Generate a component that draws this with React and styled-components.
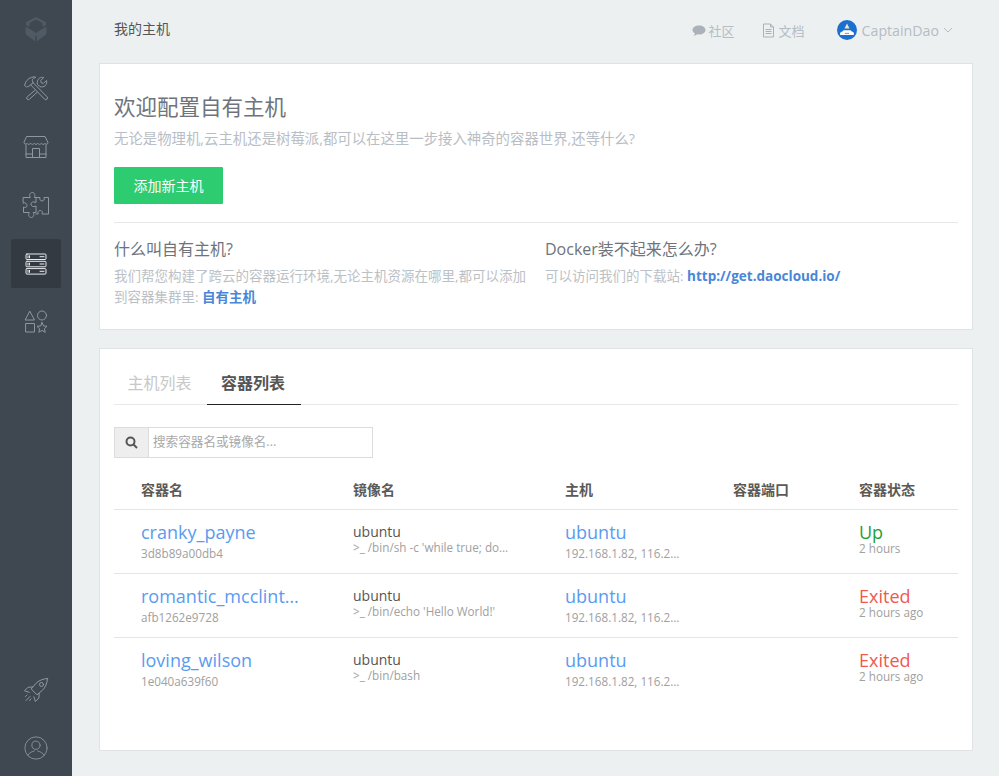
import React from 'react';
import styled, { createGlobalStyle } from 'styled-components';

const FONT = '"Open Sans", "Noto Sans CJK SC", sans-serif';

const GlobalStyle = createGlobalStyle`
  html, body {
    margin: 0;
    padding: 0;
    height: 100%;
    background: #ecf0f1;
    font-family: ${FONT};
    color: #555;
  }
  * { box-sizing: border-box; }
`;

const Page = styled.div`
  display: flex;
  width: 999px;
  height: 776px;
  overflow: hidden;
  background: #ecf0f1;
`;

const Sidebar = styled.nav`
  width: 72px;
  flex: none;
  background: #3f4750;
  display: flex;
  flex-direction: column;
  align-items: center;
  padding-top: 4px;
`;

const NavList = styled.div`
  display: flex;
  flex-direction: column;
  gap: 9.5px;
  flex: 1;
`;

const NavItem = styled.a`
  width: 50px;
  height: 49px;
  display: flex;
  align-items: center;
  justify-content: center;
  border-radius: 2px;
  color: ${p => (p.$active ? '#e8ebed' : '#8f979e')};
  background: ${p => (p.$active ? '#333a42' : 'transparent')};
`;

const LogoItem = styled(NavItem)`
  height: 50px;
`;

const BottomList = styled.div`
  display: flex;
  flex-direction: column;
  gap: 9.5px;
  padding-bottom: 3.5px;
`;

const NavSvg = styled.svg`
  width: 28px;
  height: 28px;
  fill: none;
  stroke: currentColor;
  stroke-width: 1;
  stroke-linejoin: round;
  stroke-linecap: round;
`;

const LogoSvg = styled(NavSvg)`
  stroke: none;
  fill: #505a64;
`;

const UserSvg = styled(NavSvg)`
  width: 24px;
  height: 24px;
`;

const Main = styled.main`
  width: 927px;
  padding: 0 26px 0 27px;
  display: flex;
  flex-direction: column;
`;

const TopBar = styled.header`
  height: 63px;
  display: flex;
  align-items: flex-start;
  justify-content: space-between;
  padding: 18px 20px 0 15px;
`;

const PageTitle = styled.div`
  font-size: 14px;
  line-height: 22px;
  color: #555;
`;

const TopLinks = styled.div`
  display: flex;
  align-items: center;
  height: 26px;
  margin-top: -1px;
`;

const TopLink = styled.a`
  display: flex;
  align-items: center;
  gap: ${p => p.$iconGap}px;
  font-size: 13px;
  color: #b5bcc4;
  margin-right: ${p => p.$gap}px;
`;

const UserName = styled.span`
  font-size: 14.2px;
  color: #b5bcc4;
  margin: 0 4px 0 5px;
`;

const Avatar = styled.svg`
  width: 20px;
  height: 20px;
  flex: none;
`;

const Card = styled.section`
  background: #fff;
  border: 1px solid #e0e3e5;
  padding: 0 14px;
`;

const IntroCard = styled(Card)`
  height: 267px;
  padding-top: 28px;
`;

const ListCard = styled(Card)`
  height: 403px;
  margin-top: 18px;
  padding-top: 15px;
`;

const Heading = styled.h1`
  margin: 0;
  font-size: 21.5px;
  font-weight: 400;
  line-height: 30px;
  color: #6e747b;
`;

const Lead = styled.p`
  margin: 7px 0 0;
  font-size: 14.4px;
  line-height: 20px;
  color: #b9bec4;
`;

const PrimaryButton = styled.button`
  display: block;
  width: 109px;
  height: 37px;
  margin-top: 18px;
  padding-bottom: 3px;
  border: 0;
  border-radius: 1px;
  background: #2ecc71;
  color: #fff;
  font-family: ${FONT};
  font-size: 14px;
`;

const Divider = styled.hr`
  margin: 18px 0 0;
  border: 0;
  border-top: 1px solid #e6e8ea;
`;

const HelpColumns = styled.div`
  display: grid;
  grid-template-columns: 431px 1fr;
  padding-top: 14px;
`;

const HelpBlock = styled.div`
  padding-right: 16px;
`;

const HelpTitle = styled.h2`
  margin: 0;
  font-size: 16px;
  font-weight: 400;
  line-height: 24px;
  color: #6e747b;
`;

const HelpText = styled.p`
  margin: 5px 0 0;
  font-size: 13.5px;
  line-height: 21px;
  color: #bcc1c6;
`;

const StrongLink = styled.a`
  font-weight: 700;
  color: #4a86d8;
`;

const Tabs = styled.div`
  display: flex;
  height: 41px;
  border-bottom: 1px solid #e8e8e8;
`;

const Tab = styled.a`
  width: ${p => p.$width}px;
  height: 41px;
  padding: 0 2px 5px 0;
  display: flex;
  align-items: center;
  justify-content: center;
  font-size: 16px;
  font-weight: ${p => (p.$active ? 700 : 400)};
  color: ${p => (p.$active ? '#555' : '#c8c8c8')};
  border-bottom: ${p => (p.$active ? '1px solid #222' : '0')};
`;

const SearchBox = styled.div`
  display: flex;
  width: 259px;
  height: 31px;
  margin-top: 22px;
  border: 1px solid #dcdcdc;
`;

const SearchAddon = styled.span`
  width: 34px;
  flex: none;
  display: flex;
  align-items: center;
  justify-content: center;
  background: #eee;
  border-right: 1px solid #dcdcdc;
  color: #555;
`;

const SearchInput = styled.input`
  flex: 1;
  min-width: 0;
  border: 0;
  outline: 0;
  padding: 0 4px 2px;
  font-family: ${FONT};
  font-size: 12.6px;
  color: #555;
  &::placeholder { color: #a9a9a9; opacity: 1; }
`;

const COLUMNS = '239px 212px 168px 126px 99px';

const HeadRow = styled.div`
  display: grid;
  grid-template-columns: ${COLUMNS};
  height: 52px;
  padding-top: 22px;
  border-bottom: 1px solid #e4e4e4;
  font-size: 14px;
  font-weight: 700;
  line-height: 20px;
  color: #5a5a5a;
`;

const Row = styled.div`
  display: grid;
  grid-template-columns: ${COLUMNS};
  height: 64px;
  padding-top: 10px;
  border-bottom: ${p => (p.$last ? '0' : '1px solid #e4e4e4')};
`;

const NameCell = styled.div`
  padding-left: 27px;
  min-width: 0;
`;

const Cell = styled.div`
  min-width: 0;
`;

const HostCell = styled.div`
  min-width: 0;
  padding-right: 48px;
`;

const Primary = styled.div`
  font-size: 18px;
  line-height: 24px;
  color: ${p => p.$color || '#5a9bf0'};
  white-space: nowrap;
  overflow: hidden;
  text-overflow: ellipsis;
  max-width: ${p => (p.$max ? `${p.$max}px` : 'none')};
`;

const Secondary = styled.div`
  font-size: 11.7px;
  line-height: 16px;
  color: #a0a0a0;
  white-space: nowrap;
  overflow: hidden;
  text-overflow: ellipsis;
  margin-top: ${p => (p.$tight ? '-4px' : '1px')};
`;

const ImageName = styled.div`
  font-size: 14px;
  line-height: 16px;
  padding-top: 4px;
  color: #555;
`;

const Command = styled.div`
  font-size: 11.7px;
  line-height: 15px;
  color: #a0a0a0;
  white-space: nowrap;
  overflow: hidden;
  text-overflow: ellipsis;
  max-width: 158px;
`;

function LogoIcon() {
  return (
    <LogoSvg viewBox="0 0 28 28">
      <path d="M14 2l10 5v3l-3.500 2V8L14 4.500 7.500 8v4L4 10V7z" />
      <path d="M3.500 11.500l6 3.500 4.500 3 4.500-3 6-3.500V19l-9.700 7.500V21l-.8-.5-.8.5v5.500L3.500 19z" />
    </LogoSvg>
  );
}

function ToolsIcon() {
  return (
    <NavSvg viewBox="0 0 28 28">
      <path d="M11 8.500L25 22.800a1.600 1.600 0 0 1-2.400 2.400L8.600 10.800" />
      <path d="M8.600 10.800l-1.800 1.700-1.200-.2-1 1-2.300-2.300 1-1 .1-1.200C5 5.500 8 3 12.500 2.800l1.300.5C11.500 4 10.300 5 10.300 6.300l.7 2.200z" />
      <path d="M13 16.300L5.200 22.800a1.600 1.600 0 0 0 2.200 2.400l8-7.200" />
      <path d="M17 11.800l-1.500-1.500c-.6-2.500 0-4.800 2-6.200 1.400-.9 3-1 4.200-.6l-3 3 .5 2.300 2.300.6 3-3c.6 2 .1 4-1.300 5.300-1.500 1.300-3.400 1.500-5 1z" />
    </NavSvg>
  );
}

function StoreIcon() {
  return (
    <NavSvg viewBox="0 0 28 28">
      <path d="M5 3.500h18l3 6c0 2-2.200 2.200-3 .8-.8 1.400-3 1.400-3.700 0-.8 1.400-3 1.400-3.600 0-.7 1.400-2.900 1.400-3.500 0-.7 1.400-2.900 1.400-3.600 0-.7 1.400-2.900 1.400-3.600 0-.8 1.400-3 1.200-3-.8z" />
      <path d="M4 12v12.500h20V12" />
      <path d="M10.500 24.500v-9h7v9M4 21h6.500M17.500 21H24" />
    </NavSvg>
  );
}

function PuzzleIcon() {
  return (
    <NavSvg viewBox="0 0 28 28">
      <path d="M1.500 6.500h6.800c-1.600-3 .1-5 2-5s3.500 2 2 5h1.700v5c-3-1.400-5-.3-5 1.700s2 3.200 5 1.800v6.500h-2.800c1.600 3 0 5-2 5s-3.500-2-1.900-5H1.500v-5.500c1.800 1 3.500.2 3.500-1.500S3.300 11 1.500 12z" />
      <path d="M14 6.500h4c-.6 2 .2 3.500 2 3.500s2.600-1.500 2-3.500h4.500v16.500H20c.8-1.800.1-3.500-1.800-3.500s-2.700 1.700-2 3.500H14" />
    </NavSvg>
  );
}

function ServerIcon() {
  return (
    <NavSvg viewBox="0 0 28 28">
      <rect x="4" y="4" width="20" height="5.500" rx="1" />
      <rect x="4" y="11.300" width="20" height="5.500" rx="1" />
      <rect x="4" y="18.600" width="20" height="5.500" rx="1" />
      <path d="M6 5.800v2M7.500 5.800v2M18 6.700h4M6 13.100v2M7.500 13.100v2M18 14h4M6 20.400v2M7.500 20.400v2M18 21.300h4" />
    </NavSvg>
  );
}

function ShapesIcon() {
  return (
    <NavSvg viewBox="0 0 28 28">
      <path d="M8 3.500l4.500 8.500h-9z" />
      <circle cx="20" cy="7.500" r="4.500" />
      <rect x="4" y="15.500" width="8.500" height="8.500" />
      <path d="M20 14.500l1.500 3.400 3.500.4-2.600 2.400.8 3.600-3.200-1.900-3.200 1.900.8-3.600-2.600-2.400 3.500-.4z" />
    </NavSvg>
  );
}

function RocketIcon() {
  return (
    <NavSvg viewBox="0 0 28 28">
      <path d="M25.500 2.500c-4.500.3-9 2-12 5.300l-4.300 5.200 5.800 5.800 5.200-4.300c3.300-3 5-7.500 5.300-12z" />
      <circle cx="19.500" cy="8.500" r="2" />
      <path d="M10.500 11l-4.500.3-3.500 3.500 4.700 1.500M17.200 17.500l-.3 4.500-3.500 3.500-1.500-4.700" />
      <path d="M5 19l-1.500 1.500M8 20.500l-4 4M9 23l-1.500 1.500" />
    </NavSvg>
  );
}

function UserIcon() {
  return (
    <UserSvg viewBox="0 0 28 28">
      <circle cx="14" cy="14" r="13" />
      <circle cx="14" cy="10.800" r="4.800" />
      <path d="M4.500 22.500c1.500-3 5-4.500 7.500-5M23.500 22.500c-1.500-3-5-4.500-7.500-5" />
    </UserSvg>
  );
}

const CONTAINERS = [
  {
    name: 'cranky_payne',
    id: '3d8b89a00db4',
    command: ">_ /bin/sh -c 'while true; do echo hello; done'",
    state: 'Up',
    stateColor: '#22a03c',
    since: '2 hours',
  },
  {
    name: 'romantic_mcclintock',
    id: 'afb1262e9728',
    command: ">_ /bin/echo 'Hello World!'",
    state: 'Exited',
    stateColor: '#ee5a50',
    since: '2 hours ago',
  },
  {
    name: 'loving_wilson',
    id: '1e040a639f60',
    command: '>_ /bin/bash',
    state: 'Exited',
    stateColor: '#ee5a50',
    since: '2 hours ago',
  },
];

export default function App() {
  return (
    <Page>
      <GlobalStyle />
      <Sidebar>
        <NavList>
          <LogoItem><LogoIcon /></LogoItem>
          <NavItem><ToolsIcon /></NavItem>
          <NavItem><StoreIcon /></NavItem>
          <NavItem><PuzzleIcon /></NavItem>
          <NavItem $active><ServerIcon /></NavItem>
          <NavItem><ShapesIcon /></NavItem>
        </NavList>
        <BottomList>
          <NavItem><RocketIcon /></NavItem>
          <NavItem><UserIcon /></NavItem>
        </BottomList>
      </Sidebar>
      <Main>
        <TopBar>
          <PageTitle>我的主机</PageTitle>
          <TopLinks>
            <TopLink $gap={27} $iconGap={3}>
              <svg width="14" height="13" viewBox="0 0 14 13">
                <path fill="#aab1b9" d="M7 1.500c3.600 0 6.500 2 6.500 4.500S10.600 10.500 7 10.500c-.6 0-1.200 0-1.700-.2C4.300 11.200 3 11.800 1.500 12c.8-.7 1.300-1.600 1.400-2.700C1.400 8.500.5 7.300.5 6c0-2.500 2.900-4.500 6.500-4.500z" />
              </svg>
              社区
            </TopLink>
            <TopLink $gap={32} $iconGap={4}>
              <svg width="13" height="15" viewBox="0 0 13 15" fill="none" stroke="#aab1b9">
                <path d="M1.500 1h7l3 3v10h-10zM8.500 1v3h3M3.500 6.500h6M3.500 8.500h6M3.500 10.500h6" />
              </svg>
              文档
            </TopLink>
            <Avatar viewBox="0 0 20 20">
              <circle cx="10" cy="10" r="10" fill="#1a6fd0" />
              <path fill="#fff" d="M3 14c0-1.500 1-2.500 2.500-2.500.5-1 1.500-1.500 2.500-1.200h4c1.200-.3 2.200.2 2.700 1.200 1.500 0 2.300 1 2.300 2.500 0 .6-.5 1-1 1H4c-.6 0-1-.4-1-1z" />
              <path fill="#f5e6b8" d="M10 3.500l2.500 5h-5z" />
              <path fill="#1c2f4a" d="M7.500 13.500c1-1 2-1 2.500-.3.500-.7 1.500-.7 2.500.3z" />
            </Avatar>
            <UserName>CaptainDao</UserName>
            <svg width="10" height="6" viewBox="0 0 10 6" fill="none" stroke="#b5bcc4">
              <path d="M1 1l4 4 4-4" />
            </svg>
          </TopLinks>
        </TopBar>

        <IntroCard>
          <Heading>欢迎配置自有主机</Heading>
          <Lead>无论是物理机,云主机还是树莓派,都可以在这里一步接入神奇的容器世界,还等什么?</Lead>
          <PrimaryButton>添加新主机</PrimaryButton>
          <Divider />
          <HelpColumns>
            <HelpBlock>
              <HelpTitle>什么叫自有主机?</HelpTitle>
              <HelpText>
                我们帮您构建了跨云的容器运行环境,无论主机资源在哪里,都可以添加到容器集群里: <StrongLink>自有主机</StrongLink>
              </HelpText>
            </HelpBlock>
            <HelpBlock>
              <HelpTitle>Docker装不起来怎么办?</HelpTitle>
              <HelpText>
                可以访问我们的下载站: <StrongLink>http://get.daocloud.io/</StrongLink>
              </HelpText>
            </HelpBlock>
          </HelpColumns>
        </IntroCard>

        <ListCard>
          <Tabs>
            <Tab $width={93}>主机列表</Tab>
            <Tab $width={94} $active>容器列表</Tab>
          </Tabs>
          <SearchBox>
            <SearchAddon>
              <svg width="13" height="13" viewBox="0 0 13 13" fill="none" stroke="currentColor" strokeWidth="2">
                <circle cx="5.500" cy="5.500" r="4" />
                <path d="M8.500 8.500l3.500 3.500" />
              </svg>
            </SearchAddon>
            <SearchInput placeholder="搜索容器名或镜像名..." />
          </SearchBox>
          <HeadRow>
            <NameCell>容器名</NameCell>
            <Cell>镜像名</Cell>
            <Cell>主机</Cell>
            <Cell>容器端口</Cell>
            <Cell>容器状态</Cell>
          </HeadRow>
          {CONTAINERS.map((item, i) => (
            <Row key={item.id} $last={i === CONTAINERS.length - 1}>
              <NameCell>
                <Primary $max={158}>{item.name}</Primary>
                <Secondary>{item.id}</Secondary>
              </NameCell>
              <Cell>
                <ImageName>ubuntu</ImageName>
                <Command>{item.command}</Command>
              </Cell>
              <HostCell>
                <Primary>ubuntu</Primary>
                <Secondary>192.168.1.82, 116.228.0.1</Secondary>
              </HostCell>
              <Cell />
              <Cell>
                <Primary $color={item.stateColor}>{item.state}</Primary>
                <Secondary $tight>{item.since}</Secondary>
              </Cell>
            </Row>
          ))}
        </ListCard>
      </Main>
    </Page>
  );
}
